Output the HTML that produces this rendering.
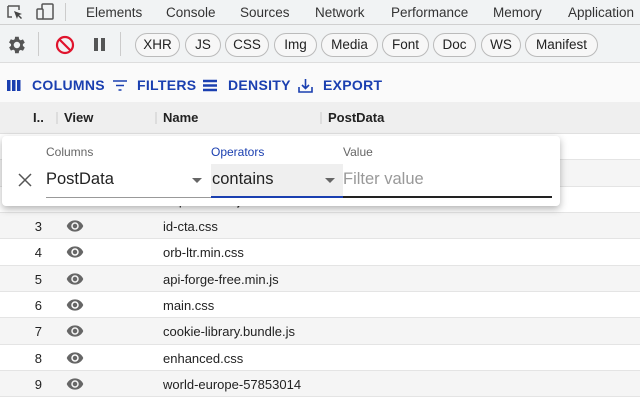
<!DOCTYPE html>
<html><head><meta charset="utf-8"><style>
*{box-sizing:border-box;margin:0;padding:0}
body{width:640px;height:400px;overflow:hidden;background:#fff;font-family:"Liberation Sans",Arial,sans-serif;position:relative}
.tabs{position:absolute;top:0;left:0;width:640px;height:25px;background:#f1f3f4;border-bottom:1px solid #d0d0d0;font-size:13.5px;color:#333}
.tabs span{position:absolute;top:5px}
.tb{position:absolute;top:25px;left:0;width:640px;height:38px;background:#f1f3f4;border-bottom:1px solid #ddd}
.chip{position:absolute;top:8px;height:24px;border:1px solid #bbb;border-radius:12px;font-size:13.5px;line-height:22px;color:#222;text-align:center;background:#f7f7f7}
.gt{position:absolute;top:63px;left:0;width:640px;height:39px;background:#fafafa}
.gt span{position:absolute;top:14px;font-size:14px;font-weight:bold;color:#1a3fb0;letter-spacing:.3px}
.hdr{position:absolute;top:102px;left:0;width:640px;height:32px;background:#efefef;border-bottom:1px solid #e0e0e0;font-size:13px;font-weight:bold;color:#222}
.hdr span{position:absolute;top:8px}
.sep{position:absolute;top:10px;width:2px;height:12px;background:#ddd}
.row{position:absolute;left:0;width:640px;height:26.3px;border-bottom:1px solid #e4e4e4;font-size:13px;color:#222}
.row.g{background:#f5f5f5}
.row .n{position:absolute;right:598px;top:6px}
.row .nm{position:absolute;left:163px;top:6px}
.eye{position:absolute;left:66px;top:4px}
.pop{position:absolute;left:2px;top:136px;width:558px;height:70px;background:#fff;border-radius:4px;box-shadow:0 3px 8px rgba(0,0,0,.3)}
.lbl{position:absolute;top:9px;font-size:12px;color:#666}
.fld{position:absolute;top:28px;height:34px;font-size:16.5px;color:#222}
</style></head><body>
<svg width="0" height="0" style="position:absolute"><symbol id="e" viewBox="0 0 24 24"><path fill="#666" d="M12 4.5C7 4.5 2.7 7.6 1 12c1.7 4.4 6 7.5 11 7.5s9.3-3.1 11-7.5c-1.7-4.4-6-7.5-11-7.5zM12 17a5 5 0 110-10 5 5 0 010 10zm0-8a3 3 0 100 6 3 3 0 000-6z"/></symbol></svg>
<div class="tabs">
<svg style="position:absolute;left:6px;top:4px" width="18" height="17"><path d="M2 2h11v4M2 2v11h4" fill="none" stroke="#555" stroke-width="1.5"/><path d="M8 7l8 3-3 1 3 3-1 1-3-3-1 3z" fill="#444"/></svg>
<svg style="position:absolute;left:35px;top:3px" width="20" height="18"><rect x="7" y="1" width="11" height="15" rx="1" fill="none" stroke="#555" stroke-width="1.5"/><rect x="2" y="6" width="6" height="10" rx="1" fill="#f1f3f4" stroke="#555" stroke-width="1.5"/></svg>
<div style="position:absolute;left:65px;top:3px;width:1px;height:18px;background:#ccc"></div>
<span style="left:86px">Elements</span><span style="left:166px">Console</span><span style="left:240px">Sources</span><span style="left:315px">Network</span><span style="left:391px">Performance</span><span style="left:493px">Memory</span><span style="left:568px">Application</span>
</div>
<div class="tb">
<svg style="position:absolute;left:6px;top:9px" width="22" height="22" viewBox="0 0 24 24"><path fill="#555" d="M19.4 13a7.5 7.5 0 000-2l2.1-1.6-2-3.5-2.5 1a7 7 0 00-1.7-1L14.9 3h-4l-.4 2.7a7 7 0 00-1.7 1l-2.5-1-2 3.5L6.5 11a7.5 7.5 0 000 2l-2.1 1.6 2 3.5 2.5-1a7 7 0 001.7 1l.3 2.9h4l.4-2.7a7 7 0 001.7-1l2.5 1 2-3.5zM12.9 15.5a3.5 3.5 0 110-7 3.5 3.5 0 010 7z" transform="translate(-1 0)"/></svg>
<div style="position:absolute;left:38px;top:7px;width:1px;height:24px;background:#ccc"></div>
<svg style="position:absolute;left:55px;top:10px" width="20" height="20"><circle cx="10" cy="10" r="8" fill="none" stroke="#e0142d" stroke-width="2.2"/><path d="M4.5 4.5l11 11" stroke="#e0142d" stroke-width="2.2"/></svg>
<div style="position:absolute;left:94px;top:13px;width:3.5px;height:13px;background:#555"></div><div style="position:absolute;left:101px;top:13px;width:3.5px;height:13px;background:#555"></div>
<div style="position:absolute;left:120px;top:7px;width:1px;height:24px;background:#ccc"></div>
<div class="chip" style="left:135px;width:45px">XHR</div>
<div class="chip" style="left:185px;width:36px">JS</div>
<div class="chip" style="left:225px;width:44px">CSS</div>
<div class="chip" style="left:274px;width:43px">Img</div>
<div class="chip" style="left:321px;width:57px">Media</div>
<div class="chip" style="left:382px;width:47px">Font</div>
<div class="chip" style="left:433px;width:43px">Doc</div>
<div class="chip" style="left:481px;width:40px">WS</div>
<div class="chip" style="left:525px;width:73px">Manifest</div>
</div>
<div class="gt">
<svg style="position:absolute;left:7px;top:17px" width="14" height="11"><rect x="0" y="0" width="3.5" height="11" fill="#1a3fb0"/><rect x="5" y="0" width="3.5" height="11" fill="#1a3fb0"/><rect x="10" y="0" width="3.5" height="11" fill="#1a3fb0"/></svg>
<span style="left:32px">COLUMNS</span>
<svg style="position:absolute;left:113px;top:17px" width="14" height="11"><path d="M0 1h14M3 5.5h8M5.5 10h3" stroke="#1a3fb0" stroke-width="1.6"/></svg>
<span style="left:137px">FILTERS</span>
<svg style="position:absolute;left:203px;top:16px" width="14" height="13"><path d="M0 2h14M0 6.5h14M0 11h14" stroke="#1a3fb0" stroke-width="2.4"/></svg>
<span style="left:228px">DENSITY</span>
<svg style="position:absolute;left:298px;top:15px" width="15" height="15"><path d="M7.5 1v9M4 7l3.5 3.5L11 7M1 9v5h13V9" fill="none" stroke="#1a3fb0" stroke-width="1.6"/></svg>
<span style="left:323px">EXPORT</span>
</div>
<div class="hdr">
<span style="left:33px">I..</span><div class="sep" style="left:56px"></div>
<span style="left:64px">View</span><div class="sep" style="left:155px"></div>
<span style="left:163px">Name</span><div class="sep" style="left:320px"></div>
<span style="left:328px">PostData</span>
</div>
<div class="row" style="top:134px"></div>
<div class="row g" style="top:160.3px"></div>
<div class="row" style="top:186.6px"><span class="nm">requestData.js</span></div>
<div class="row g" style="top:213px"><span class="n">3</span><svg class="eye" width="18" height="18"><use href="#e"/></svg><span class="nm">id-cta.css</span></div>
<div class="row" style="top:239.3px"><span class="n">4</span><svg class="eye" width="18" height="18"><use href="#e"/></svg><span class="nm">orb-ltr.min.css</span></div>
<div class="row g" style="top:265.6px"><span class="n">5</span><svg class="eye" width="18" height="18"><use href="#e"/></svg><span class="nm">api-forge-free.min.js</span></div>
<div class="row" style="top:292px"><span class="n">6</span><svg class="eye" width="18" height="18"><use href="#e"/></svg><span class="nm">main.css</span></div>
<div class="row g" style="top:318.3px"><span class="n">7</span><svg class="eye" width="18" height="18"><use href="#e"/></svg><span class="nm">cookie-library.bundle.js</span></div>
<div class="row" style="top:344.6px"><span class="n">8</span><svg class="eye" width="18" height="18"><use href="#e"/></svg><span class="nm">enhanced.css</span></div>
<div class="row g" style="top:371px"><span class="n">9</span><svg class="eye" width="18" height="18"><use href="#e"/></svg><span class="nm">world-europe-57853014</span></div>
<div class="pop">
<svg style="position:absolute;left:16px;top:37px" width="14" height="14"><path d="M1 1l12 12M13 1L1 13" stroke="#555" stroke-width="1.5"/></svg>
<div class="lbl" style="left:44px">Columns</div>
<div class="lbl" style="left:209px;color:#1a3fb0">Operators</div>
<div class="lbl" style="left:341px">Value</div>
<div class="fld" style="left:44px;width:165px;border-bottom:1px solid #999"><span style="position:absolute;top:6px">PostData</span><svg style="position:absolute;left:146px;top:14px" width="10" height="6"><path d="M0 0h10L5 5z" fill="#666"/></svg></div>
<div class="fld" style="left:209px;width:132px;background:#efefef;border-bottom:2px solid #1a3fb0"><span style="position:absolute;top:6px;left:1px">contains</span><svg style="position:absolute;left:114px;top:14px" width="10" height="6"><path d="M0 0h10L5 5z" fill="#666"/></svg></div>
<div class="fld" style="left:341px;width:209px;border-bottom:2px solid #222"><span style="position:absolute;top:6px;color:#999">Filter value</span></div>
</div>
</body></html>
